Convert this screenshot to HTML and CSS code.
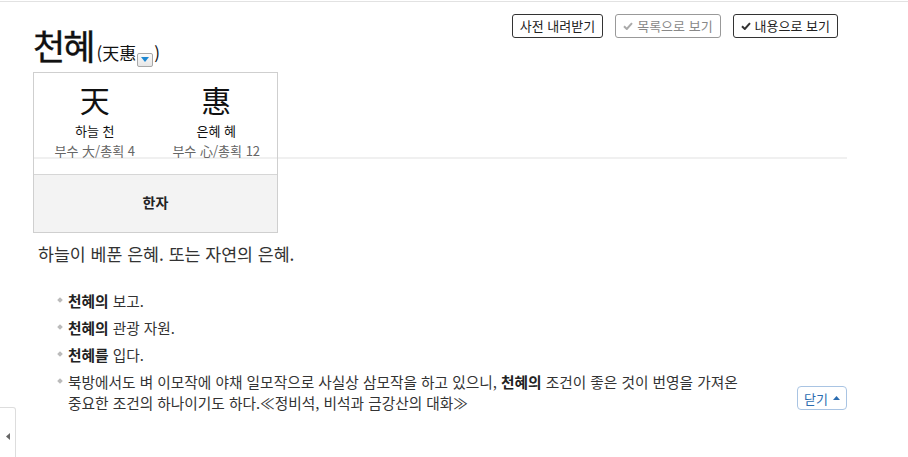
FILE: index.html
```html
<!DOCTYPE html>
<html lang="ko">
<head>
<meta charset="utf-8">
<title>천혜</title>
<link rel="stylesheet" href="styles.css">
</head>
<body>
<div class="topline"></div>
<div class="page">
  <header class="head">
    <h1 class="title">천혜<span class="origin">(天惠<span class="dd"><svg width="8" height="5" viewBox="0 0 8 5"><path d="M0 0H8L4 5Z" fill="#1e88d2"/></svg></span>)</span></h1>
    <div class="actions">
      <button class="btn">사전 내려받기</button>
      <button class="btn btn-off"><svg class="chk" width="10" height="8" viewBox="0 0 10 8"><path d="M1 4.2L3.8 7L9 1.2" fill="none" stroke="currentColor" stroke-width="2"/></svg>목록으로 보기</button>
      <button class="btn"><svg class="chk" width="10" height="8" viewBox="0 0 10 8"><path d="M1 4.2L3.8 7L9 1.2" fill="none" stroke="currentColor" stroke-width="2"/></svg>내용으로 보기</button>
    </div>
  </header>

  <section class="panel">
    <div class="card">
      <div class="chars">
        <div class="ch">
          <div class="big">天</div>
          <div class="mean">하늘 천</div>
          <div class="info">부수 大/총획 4</div>
        </div>
        <div class="ch">
          <div class="big">惠</div>
          <div class="mean">은혜 혜</div>
          <div class="info">부수 心/총획 12</div>
        </div>
      </div>
      <div class="cardfoot">한자</div>
    </div>
  </section>

  <p class="def">하늘이 베푼 은혜. 또는 자연의 은혜.</p>

  <div class="exrow">
    <ul class="ex">
      <li><b>천혜의</b> 보고.</li>
      <li><b>천혜의</b> 관광 자원.</li>
      <li><b>천혜를</b> 입다.</li>
      <li>북방에서도 벼 이모작에 야채 일모작으로 사실상 삼모작을 하고 있으니, <b>천혜의</b> 조건이 좋은 것이 번영을 가져온 중요한 조건의 하나이기도 하다.≪정비석, 비석과 금강산의 대화≫</li>
    </ul>
    <button class="close">닫기 <svg width="7" height="4" viewBox="0 0 7 4"><path d="M0 4L3.5 0L7 4Z" fill="#2b6cb0"/></svg></button>
  </div>
</div>
<div class="sidetab"><svg width="4" height="7" viewBox="0 0 4 7"><path d="M4 0V7L0 3.5Z" fill="#666"/></svg></div>
</body>
</html>
```

FILE: styles.css
```css
* { box-sizing: border-box; }
html, body { margin: 0; padding: 0; background: #fff; }
body {
  font-family: "Noto Sans CJK KR", "Noto Sans", sans-serif;
  color: #222;
  width: 908px;
  height: 457px;
  overflow: hidden;
}
.topline { height: 1px; margin-top: 1px; background: #e2e2e2; }
.page { padding: 0 61px 0 33px; }

.head {
  display: flex;
  justify-content: space-between;
  height: 70px;
}
.title {
  align-self: flex-end;
  margin: 0 0 -2px 0;
  font-size: 35px;
  font-weight: 400;
  line-height: 42px;
  color: #111;
  letter-spacing: -2px;
  -webkit-text-stroke: 0.4px #111;
}
.origin {
  font-size: 17px;
  font-weight: 400;
  letter-spacing: 0;
  margin-left: 3px;
  -webkit-text-stroke: 0;
}
.dd {
  display: inline-flex;
  align-items: center;
  justify-content: center;
  width: 16px;
  height: 14px;
  border: 1px solid #a8a8a8;
  border-radius: 2px;
  background: linear-gradient(#fbfbfb, #e6e6e6);
  vertical-align: -2px;
  margin: 0 1px;
}
.actions {
  display: flex;
  gap: 12px;
  margin-top: 12px;
  margin-right: 9px;
  align-self: flex-start;
}
.btn {
  font-family: inherit;
  font-size: 13px;
  height: 24px;
  padding: 0 7px;
  line-height: 22px;
  border: 1px solid #333;
  border-radius: 3px;
  background: #fff;
  color: #222;
  display: inline-flex;
  align-items: center;
  gap: 4px;
}
.btn-off { border-color: #999; color: #888; }
.btn-off .chk { color: #aaa; }
.chk { color: #333; }

.panel {
  height: 87px;
  border-bottom: 2px solid #f0f0f0;
  width: 814px;
}
.card {
  width: 245px;
  height: 161px;
  border: 1px solid #cfcfcf;
  display: flex;
  flex-direction: column;
}
.chars {
  display: grid;
  grid-template-columns: 1fr 1fr;
  height: 102px;
  border-bottom: 1px solid #d6d6d6;
  padding-top: 8px;
}
.ch { text-align: center; }
.big { font-size: 30px; line-height: 36px; color: #111; font-family: "Noto Sans CJK SC", "Noto Sans CJK KR", sans-serif; }
.mean { font-size: 13px; line-height: 18px; margin-top: 5px; color: #111; }
.info { font-size: 13px; line-height: 20px; color: #666; margin-top: 1px; }
.cardfoot {
  flex: 1;
  background: #f3f3f3;
  display: flex;
  align-items: center;
  justify-content: center;
  font-weight: 700;
  font-size: 14px;
  color: #222;
  padding-bottom: 4px;
}

.def {
  margin: 83px 0 0 5px;
  font-size: 17.3px;
  line-height: 24px;
  color: #333;
}

.exrow {
  display: flex;
  align-items: flex-end;
  justify-content: space-between;
  margin-top: 24px;
}
.ex {
  list-style: none;
  margin: 0;
  padding: 0 0 0 35px;
  width: 730px;
  font-size: 14.7px;
  color: #333;
  word-break: keep-all;
}
.ex li {
  position: relative;
  line-height: 21px;
  margin-bottom: 6px;
}
.ex li::before {
  content: "";
  position: absolute;
  left: -10px;
  top: 8px;
  width: 4px;
  height: 4px;
  background: #bbb;
  transform: rotate(45deg);
}
.ex b { font-weight: 700; color: #222; }
.close {
  font-family: inherit;
  font-size: 13px;
  color: #2b6cb0;
  background: #fff;
  border: 1px solid #a9c4e3;
  border-radius: 4px;
  height: 24px;
  width: 50px;
  padding: 0;
  display: inline-flex;
  align-items: center;
  justify-content: center;
  gap: 5px;
  margin-bottom: 9px;
}

.sidetab {
  position: fixed;
  left: 0;
  top: 407px;
  width: 16px;
  height: 60px;
  border: 1px solid #ddd;
  border-left: none;
  border-radius: 0 3px 0 0;
  background: #fff;
  display: flex;
  align-items: center;
  justify-content: center;
  padding-bottom: 29px;
}
.sidetab svg { margin-top: 27px; }
```
